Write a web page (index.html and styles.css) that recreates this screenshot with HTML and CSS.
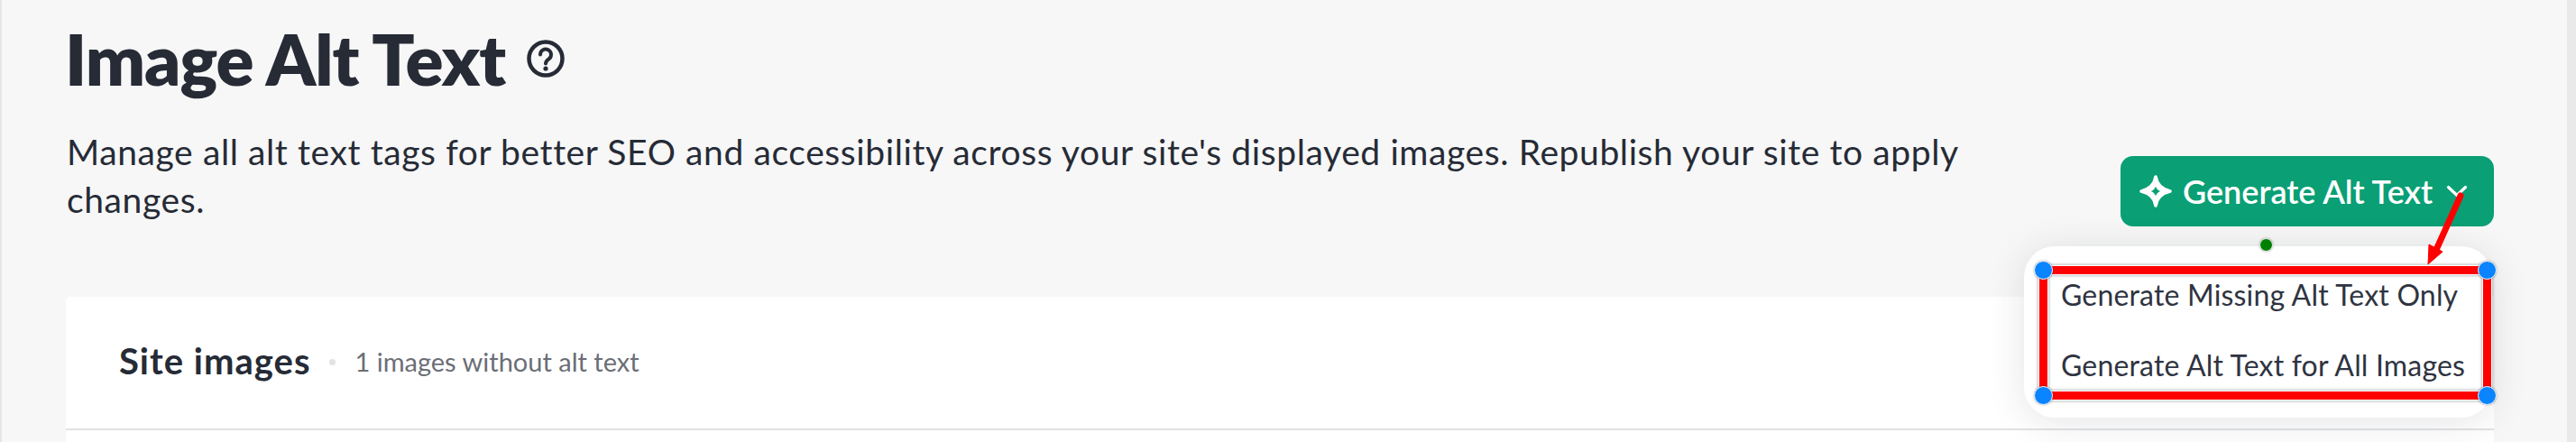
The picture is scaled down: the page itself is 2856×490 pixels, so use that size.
FILE: index.html
```html
<!DOCTYPE html>
<html lang="en">
<head>
<meta charset="utf-8">
<title>Image Alt Text</title>
<link rel="stylesheet" href="styles.css">
</head>
<body>
<div class="page">
  <main class="content">
    <div class="title-row">
      <h1 class="title">Image Alt Text</h1>
      <svg class="help" viewBox="0 0 42 42" aria-hidden="true">
        <circle cx="21" cy="21" r="18.5" fill="none" stroke="#262b36" stroke-width="4.500"/>
        <path d="M15 16.500a6 6 0 1 1 9.500 4.900c-2.200 1.500-3.500 2.600-3.500 5" fill="none" stroke="#262b36" stroke-width="4" stroke-linecap="round"/>
        <circle cx="21" cy="32" r="2.600" fill="#262b36"/>
      </svg>
    </div>
    <div class="intro">
      <p class="desc">Manage all alt text tags for better SEO and accessibility across your site's displayed images. Republish your site to apply changes.</p>
      <button class="generate">
        <svg class="spark" viewBox="0 0 34 34" aria-hidden="true">
          <path d="M17 2c1.200 8.200 5.800 12.800 15 15-9.200 2.200-13.800 6.800-15 15-1.200-8.200-5.800-12.800-15-15 9.200-2.200 13.800-6.800 15-15Z" fill="#fff" stroke="#fff" stroke-width="3.500" stroke-linejoin="round"/>
          <path d="M17 12c.9 2.500 2.500 4.100 5 5-2.500.9-4.100 2.500-5 5-.9-2.500-2.500-4.100-5-5 2.500-.9 4.100-2.500 5-5Z" fill="#0a9f75"/>
        </svg>
        <span>Generate Alt Text</span>
        <svg class="chev" viewBox="0 0 24 14" aria-hidden="true">
          <path d="M2.500 2.500 12 11.500l9.500-9" fill="none" stroke="#fff" stroke-width="3.200" stroke-linecap="round" stroke-linejoin="round"/>
        </svg>
      </button>
    </div>
    <section class="card">
      <header class="card-head">
        <h2 class="card-title">Site images</h2>
        <span class="sep"></span>
        <span class="count">1 images without alt text</span>
      </header>
    </section>
  </main>
  <div class="scrollbar"></div>

  <div class="menu">
    <div class="menu-item">Generate Missing Alt Text Only</div>
    <div class="menu-item">Generate Alt Text for All Images</div>
  </div>

  <div class="mark">
    <i class="handle tl"></i><i class="handle tr"></i><i class="handle bl"></i><i class="handle br"></i>
  </div>
  <i class="rotate"></i>
  <svg class="arrow" viewBox="0 0 2856 490" aria-hidden="true">
    <path d="M2728 217 2701 277" stroke="#f00" stroke-width="7" stroke-linecap="round" fill="none"/>
    <path d="M2692 293 2693 271 2708 279Z" fill="#f00" stroke="#f00" stroke-width="1"/>
  </svg>
</div>
</body>
</html>
```
FILE: styles.css
```css
* { box-sizing: border-box; }
html, body { margin: 0; height: 490px; overflow: hidden; }
body { font-family: "Lato", "Noto Sans", sans-serif; color: #262b36; background: #f7f7f7; }

.page { display: flex; height: 490px; border-left: 2px solid #e6e6e6; }
.content { flex: 1; min-width: 0; padding: 0 81px 0 71px; }
.scrollbar { width: 10px; background: #e9e9e9; }

.title-row { display: flex; align-items: center; gap: 24px; height: 130px; }
.title { margin: 0 0 0 -1px; font-size: 78px; line-height: 100px; font-weight: 800; letter-spacing: -1px; }
.help { width: 42px; height: 42px; }

.intro { display: flex; align-items: flex-start; justify-content: space-between; height: 199px; }
.desc { margin: 12px 0 0 1px; width: 2110px; font-size: 39px; line-height: 53px; font-weight: 400; letter-spacing: .6px; }

.generate {
  display: flex; align-items: center; gap: 12px;
  width: 414px; height: 78px; margin-top: 43px; padding: 0 24px 0 21px;
  background: #0a9f75; color: #fff; border: 0; border-radius: 14px;
  font: 600 36px "Lato", sans-serif;
}
.spark { width: 36px; height: 36px; flex: none; }
.chev { width: 24px; height: 14px; margin-left: 3px; flex: none; }

.card { height: 161px; background: #fff; border-radius: 5px 0 0 0; }
.card-head { display: flex; align-items: center; height: 148px; padding: 0 0 4px 59px; border-bottom: 2px solid #e2e2e4; }
.card-title { margin: 0; font-size: 40px; font-weight: 700; letter-spacing: 1px; }
.sep { width: 7px; height: 7px; margin: 2px 21px 0 21px; border-radius: 50%; background: #e2e2e4; }
.count { font-size: 29px; color: #6b6e76; }

.menu {
  position: absolute; left: 2244px; top: 273px; width: 519px; height: 190px;
  padding-top: 28px; background: #fff; border-radius: 34px;
  box-shadow: 0 4px 40px rgba(40, 44, 60, .13);
}
.menu-item { height: 78px; padding-left: 41px; font-size: 32px; line-height: 52px; letter-spacing: .18px; white-space: nowrap; color: #2f3441; }

.mark {
  position: absolute; left: 2261px; top: 295px; width: 501px; height: 148px;
  border: 9px solid #f00;
  box-shadow: 0 0 0 1px #fff, 0 0 3px 2px rgba(0,0,0,.25), inset 0 0 0 1px #fff, inset 0 0 3px 2px rgba(0,0,0,.25);
}
.handle { position: absolute; width: 21px; height: 21px; border-radius: 50%; background: #0a84ff; border: 1.500px solid #fff; box-shadow: 0 0 2px rgba(0,0,0,.45); }
.tl { left: -15px; top: -15px; }
.tr { right: -15px; top: -15px; }
.bl { left: -15px; bottom: -15px; }
.br { right: -15px; bottom: -15px; }
.rotate { position: absolute; left: 2505px; top: 264px; width: 15px; height: 15px; border-radius: 50%; background: #008000; border: 1.500px solid #fff; box-shadow: 0 0 2px rgba(0,0,0,.45); }
.arrow { position: absolute; left: 0; top: 0; width: 2856px; height: 490px; pointer-events: none; }
```
